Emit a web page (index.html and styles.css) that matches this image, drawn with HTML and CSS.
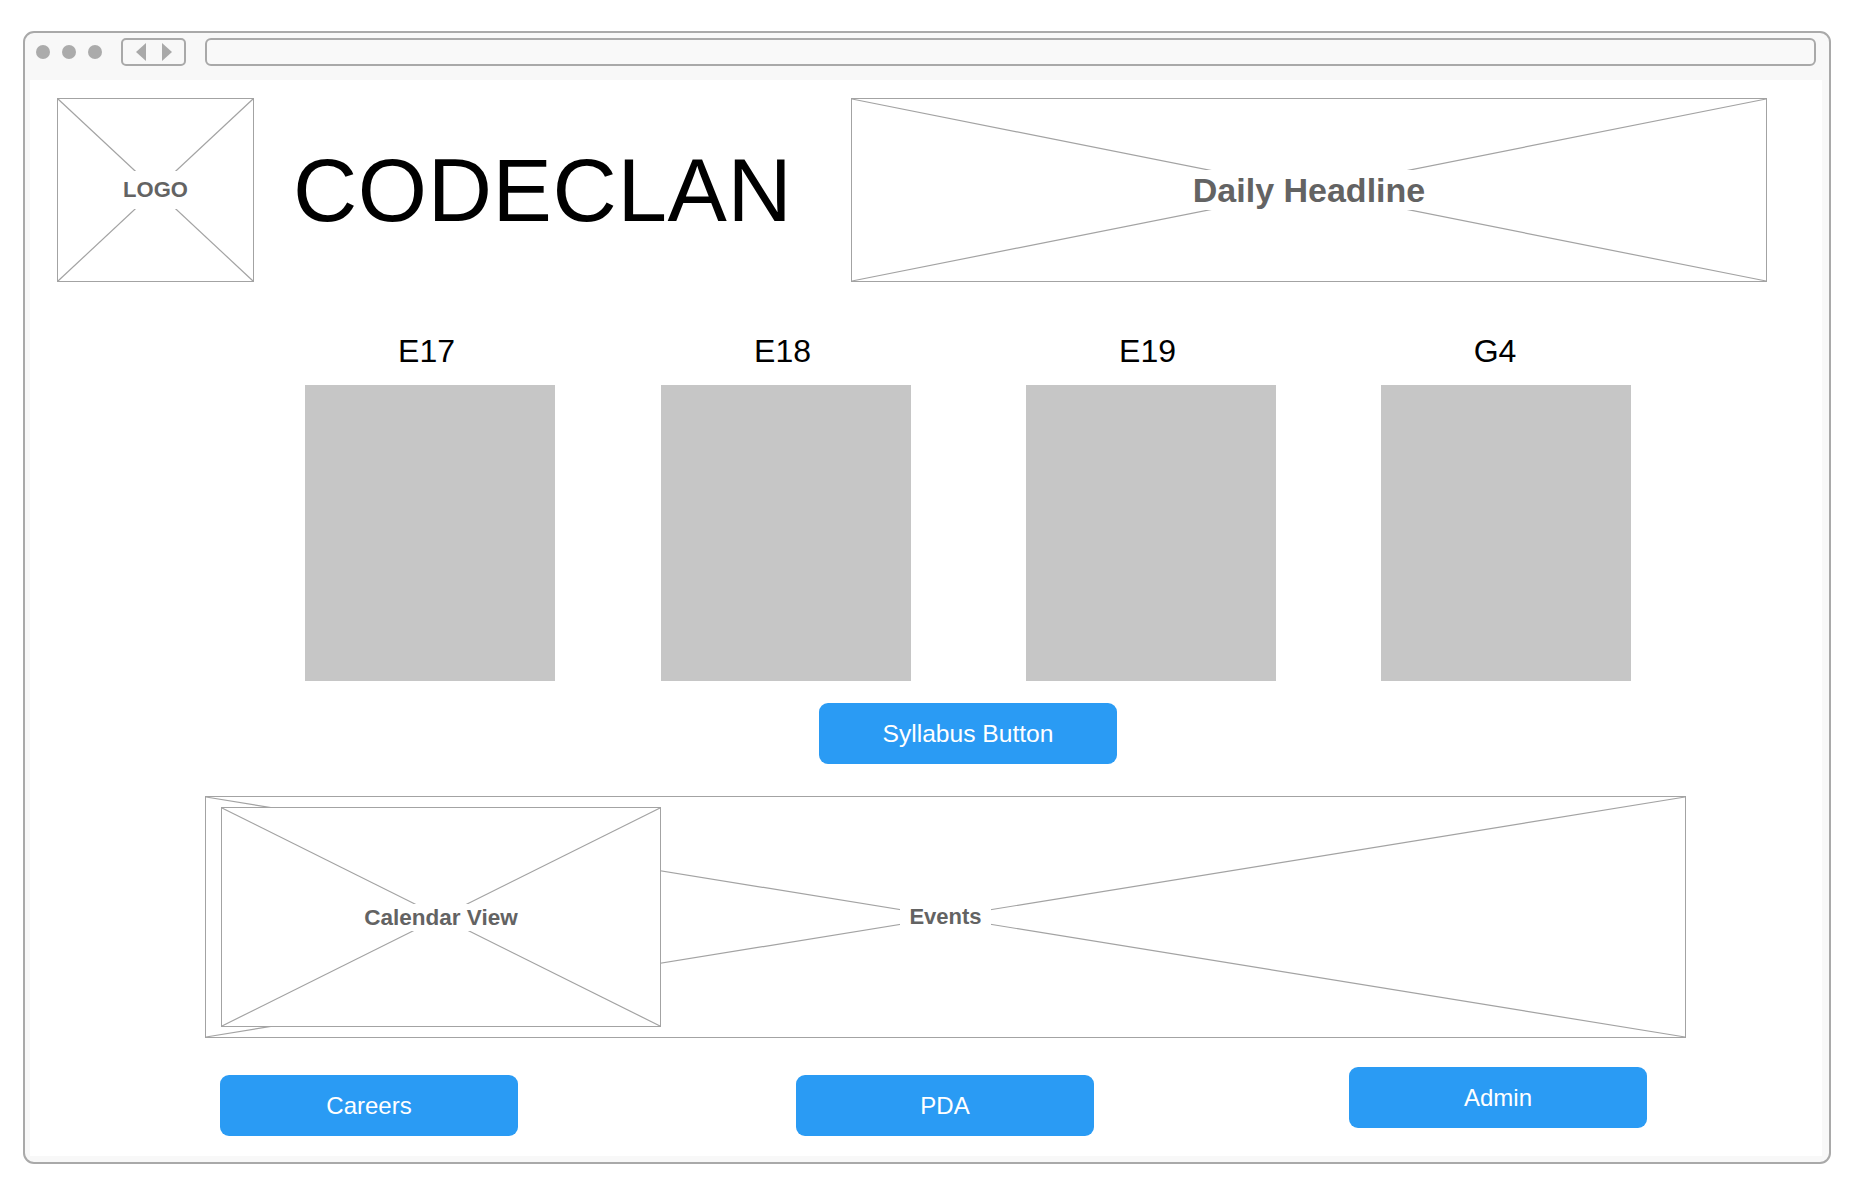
FILE: index.html
```html
<!DOCTYPE html>
<html lang="en">
<head>
<meta charset="utf-8">
<title>CodeClan wireframe</title>
<link rel="stylesheet" href="styles.css">
</head>
<body>
<div class="window">
  <div class="toolbar">
    <div class="dots"><span class="dot"></span><span class="dot"></span><span class="dot"></span></div>
    <div class="nav"><span class="tri tri-left"></span><span class="tri tri-right"></span></div>
    <div class="url"></div>
  </div>
  <main class="content">
    <header class="header">
      <div class="ph ph-logo">
        <svg class="ph-x"><line x1="0" y1="0" x2="100%" y2="100%"/><line x1="100%" y1="0" x2="0" y2="100%"/></svg>
        <span class="ph-label ph-label-logo">LOGO</span>
      </div>
      <h1 class="brand">CODECLAN</h1>
      <div class="ph ph-headline">
        <svg class="ph-x"><line x1="0" y1="0" x2="100%" y2="100%"/><line x1="100%" y1="0" x2="0" y2="100%"/></svg>
        <span class="ph-label ph-label-headline">Daily Headline</span>
      </div>
    </header>

    <section class="cards">
      <div class="card"><div class="card-label">E17</div><div class="card-box"></div></div>
      <div class="card card-2"><div class="card-label">E18</div><div class="card-box"></div></div>
      <div class="card card-3"><div class="card-label">E19</div><div class="card-box"></div></div>
      <div class="card card-4"><div class="card-label card-label-g4">G4</div><div class="card-box"></div></div>
    </section>

    <button class="btn btn-syllabus">Syllabus Button</button>

    <section class="ph events">
      <svg class="ph-x"><line x1="0" y1="0" x2="100%" y2="100%"/><line x1="100%" y1="0" x2="0" y2="100%"/></svg>
      <div class="ph calendar">
        <svg class="ph-x"><line x1="0" y1="0" x2="100%" y2="100%"/><line x1="100%" y1="0" x2="0" y2="100%"/></svg>
        <span class="ph-label ph-label-small ph-label-calendar">Calendar View</span>
      </div>
      <span class="ph-label ph-label-small events-label">Events</span>
    </section>

    <nav class="actions">
      <button class="btn btn-careers">Careers</button>
      <button class="btn btn-pda">PDA</button>
      <button class="btn btn-admin">Admin</button>
    </nav>
  </main>
</div>
</body>
</html>
```

FILE: styles.css
```css
* { box-sizing: border-box; }

html, body {
  margin: 0;
  padding: 0;
  background: #ffffff;
}

body {
  width: 1860px;
  height: 1184px;
  overflow: hidden;
  font-family: "Liberation Sans", Arial, Helvetica, sans-serif;
  padding-top: 31px;
  padding-left: 23px;
}

.window {
  width: 1808px;
  height: 1133px;
  border: 2px solid #a9a9a9;
  border-radius: 11px;
  background: #f8f8f8;
  display: flex;
  flex-direction: column;
}

/* ---------- toolbar ---------- */
.toolbar {
  height: 47px;
  flex: none;
  display: flex;
  align-items: flex-start;
  gap: 19px;
  padding: 5px 13px 0 11px;
}

.dots {
  display: flex;
  gap: 12px;
  margin-top: 7px;
}

.dot {
  width: 14px;
  height: 14px;
  border-radius: 50%;
  background: #ababab;
}

.nav {
  width: 65px;
  height: 28px;
  border: 2px solid #a9a9a9;
  border-radius: 5px;
  display: flex;
  align-items: center;
  justify-content: center;
  gap: 16px;
}

.tri {
  width: 0;
  height: 0;
  border-top: 9px solid transparent;
  border-bottom: 9px solid transparent;
}

.tri-left { border-right: 10px solid #a9a9a9; }
.tri-right { border-left: 10px solid #a9a9a9; }

.url {
  flex: 1;
  height: 28px;
  border: 2px solid #a9a9a9;
  border-radius: 6px;
  background: #f9f9f9;
}

/* ---------- content ---------- */
.content {
  flex: 1;
  margin: 0 7px 6px 5px;
  background: #ffffff;
  display: flex;
  flex-direction: column;
  align-items: flex-start;
}

/* placeholders */
.ph {
  position: relative;
  border: 1px solid #a3a3a3;
  background: #ffffff;
  display: flex;
  align-items: center;
  justify-content: center;
}

.ph-x {
  position: absolute;
  left: 0;
  top: 0;
  width: 100%;
  height: 100%;
  overflow: visible;
}

.ph-x line {
  stroke: #a3a3a3;
  stroke-width: 1.2;
}

.ph-label {
  position: relative;
  background: #ffffff;
  color: #636363;
  font-weight: bold;
  line-height: 1.2;
  padding: 2px 8px;
}

.ph-label-logo { font-size: 22px; padding: 6px 8px; }
.ph-label-headline { font-size: 34px; padding: 0 10px; }
.ph-label-small { font-size: 22px; padding: 0 9px; }
.ph-label-calendar { font-size: 22.5px; }

/* header */
.header {
  display: flex;
  align-items: flex-start;
  width: 100%;
  padding: 18px 55px 0 27px;
}

.ph-logo {
  width: 197px;
  height: 184px;
  flex: none;
}

.brand {
  margin: 0 0 0 39px;
  align-self: center;
  font-size: 89px;
  font-weight: normal;
  color: #000000;
  letter-spacing: 0.6px;
  line-height: 1;
}

.ph-headline {
  margin-left: auto;
  width: 916px;
  height: 184px;
}

/* cards */
.cards {
  display: flex;
  margin: 51px 0 0 275px;
}

.card {
  width: 250px;
  display: flex;
  flex-direction: column;
}

.card-2 { margin-left: 106px; }
.card-3 { margin-left: 115px; }
.card-4 { margin-left: 105px; }

.card-label {
  font-size: 32px;
  line-height: 37px;
  text-align: center;
  color: #000000;
  padding-right: 7px;
}

.card-label-g4 { padding-right: 22px; }

.card-box {
  margin-top: 15px;
  height: 296px;
  background: #c6c6c6;
}

/* buttons */
.btn {
  width: 298px;
  height: 61px;
  border: none;
  border-radius: 9px;
  background: #2a9bf4;
  color: #ffffff;
  font-family: "Liberation Sans", Arial, Helvetica, sans-serif;
  font-size: 24px;
  padding: 0;
  display: flex;
  align-items: center;
  justify-content: center;
}

.btn-syllabus {
  margin: 22px 0 0 789px;
  font-size: 24.6px;
}

/* events */
.events {
  margin: 32px 0 0 175px;
  width: 1481px;
  height: 242px;
  display: grid;
  grid-template-columns: 1fr;
  grid-template-rows: 1fr;
}

.calendar {
  grid-area: 1 / 1;
  justify-self: start;
  align-self: center;
  margin-left: 15px;
  width: 440px;
  height: 220px;
}

.events-label {
  grid-area: 1 / 1;
  place-self: center;
}

/* bottom actions */
.actions {
  display: flex;
  align-items: flex-start;
  margin: 29px 0 0 190px;
}

.btn-careers { margin-top: 8px; }
.btn-pda { margin: 8px 0 0 278px; }
.btn-admin { margin-left: 255px; }
```
